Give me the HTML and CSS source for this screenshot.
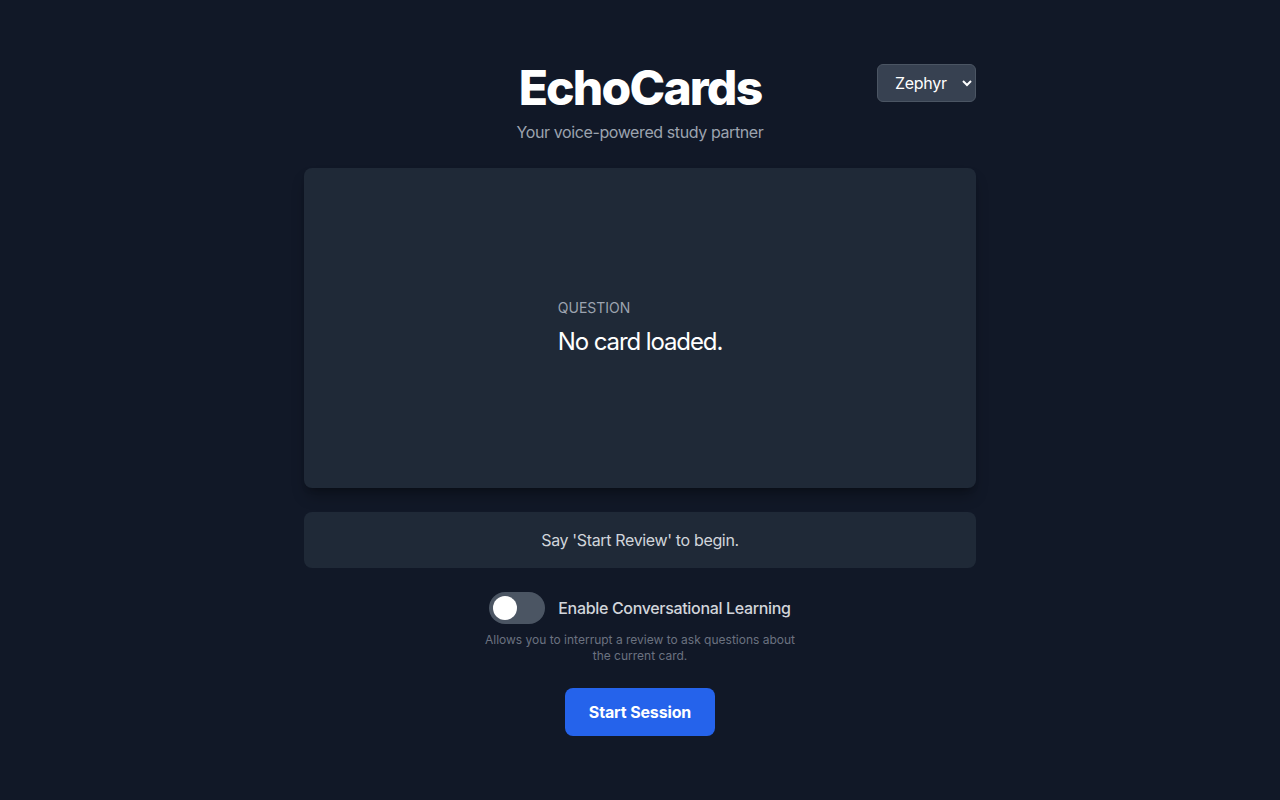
FILE: index.html
```html
<!DOCTYPE html>
<html lang="en">
<head>
<meta charset="utf-8">
<title>EchoCards</title>
<link rel="stylesheet" href="styles.css">
</head>
<body>
<main class="app">
  <header class="header">
    <h1 class="title">EchoCards</h1>
    <p class="subtitle">Your voice-powered study partner</p>
    <select class="voice-select">
      <option>Zephyr</option>
    </select>
  </header>

  <section class="card">
    <div class="card-content">
      <div class="card-label">QUESTION</div>
      <div class="card-text">No card loaded.</div>
    </div>
  </section>

  <div class="status">Say 'Start Review' to begin.</div>

  <div class="toggle-row">
    <span class="toggle"><span class="knob"></span></span>
    <span class="toggle-label">Enable Conversational Learning</span>
  </div>
  <p class="helper">Allows you to interrupt a review to ask questions about the current card.</p>

  <div class="actions">
    <button class="start-btn">Start Session</button>
  </div>
</main>
</body>
</html>
```

FILE: styles.css
```css
* { box-sizing: border-box; }
html, body {
  margin: 0;
  padding: 0;
  background: #111827;
  color: #f9fafb;
  font-family: Inter, "Noto Sans", "Liberation Sans", sans-serif;
  min-height: 100%;
}
.app {
  width: 672px;
  margin: 0 auto;
  padding-top: 64px;
  display: flex;
  flex-direction: column;
}
.header {
  position: relative;
  text-align: center;
  margin-bottom: 24px;
}
.title {
  margin: 0;
  font-size: 48px;
  line-height: 48px;
  font-weight: 800;
  letter-spacing: -1.8px;
  color: #ffffff;
}
.subtitle {
  margin: 8px 0 0;
  font-size: 16px;
  line-height: 24px;
  letter-spacing: -0.4px;
  color: #9ca3af;
}
.voice-select {
  position: absolute;
  top: 0;
  right: 0;
  height: 38px;
  width: 99px;
  padding: 0 6px 0 13px;
  background: #374151;
  color: #ffffff;
  border: 1px solid #4b5563;
  border-radius: 6px;
  font-family: inherit;
  font-size: 16px;
  letter-spacing: -0.3px;
}
.card {
  height: 320px;
  background: #1f2937;
  border-radius: 8px;
  box-shadow: 0 10px 15px -3px rgba(0,0,0,0.3), 0 4px 6px -4px rgba(0,0,0,0.3);
  display: flex;
  align-items: center;
  justify-content: center;
}
.card-content {
  display: flex;
  flex-direction: column;
}
.card-label {
  font-size: 14px;
  line-height: 20px;
  color: #9ca3af;
  margin-bottom: 8px;
}
.card-text {
  font-size: 24px;
  line-height: 32px;
  letter-spacing: -1.1px;
  color: #ffffff;
}
.status {
  margin-top: 24px;
  background: #1f2937;
  border-radius: 8px;
  padding: 16px;
  text-align: center;
  font-size: 16px;
  line-height: 24px;
  letter-spacing: -0.35px;
  color: #d1d5db;
}
.toggle-row {
  margin-top: 24px;
  display: flex;
  justify-content: center;
  align-items: center;
  gap: 13px;
}
.toggle {
  width: 56px;
  height: 32px;
  border-radius: 16px;
  background: #4b5563;
  display: flex;
  align-items: center;
  padding-left: 4px;
}
.knob {
  width: 24px;
  height: 24px;
  border-radius: 50%;
  background: #ffffff;
}
.toggle-label {
  font-size: 16px;
  line-height: 24px;
  font-weight: 500;
  letter-spacing: -0.33px;
  color: #d1d5db;
}
.helper {
  margin: 8px auto 0;
  max-width: 320px;
  text-align: center;
  font-size: 12px;
  line-height: 16px;
  color: #6b7280;
}
.actions {
  margin-top: 24px;
  display: flex;
  justify-content: center;
}
.start-btn {
  height: 48px;
  padding: 0 24px;
  background: #2563eb;
  color: #ffffff;
  border: none;
  border-radius: 8px;
  font-family: inherit;
  font-size: 16px;
  font-weight: 700;
  letter-spacing: -0.15px;
}
```
